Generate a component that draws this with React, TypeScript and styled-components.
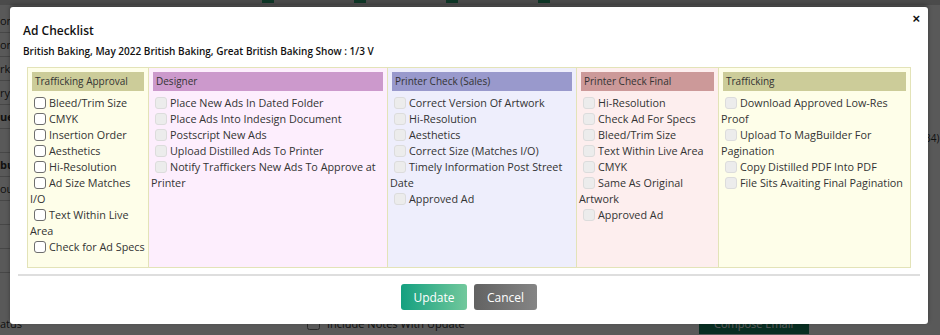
import styled, { createGlobalStyle } from 'styled-components';

const GlobalStyle = createGlobalStyle`
  body {
    margin: 0;
    font-family: "Open Sans", "Liberation Sans", sans-serif;
    color: #333;
  }
`;

type Column = {
  title: string;
  header: string;
  bg: string;
  enabled: boolean;
  items: string[];
};

const columns: Column[] = [
  {
    title: 'Trafficking Approval',
    header: '#cccc99',
    bg: '#fefee9',
    enabled: true,
    items: [
      'Bleed/Trim Size',
      'CMYK',
      'Insertion Order',
      'Aesthetics',
      'Hi-Resolution',
      'Ad Size Matches I/O',
      'Text Within Live Area',
      'Check for Ad Specs',
    ],
  },
  {
    title: 'Designer',
    header: '#cc99cc',
    bg: '#fdeefd',
    enabled: false,
    items: [
      'Place New Ads In Dated Folder',
      'Place Ads Into Indesign Document',
      'Postscript New Ads',
      'Upload Distilled Ads To Printer',
      'Notify Traffickers New Ads To Approve at Printer',
    ],
  },
  {
    title: 'Printer Check (Sales)',
    header: '#9999cc',
    bg: '#eeeefc',
    enabled: false,
    items: [
      'Correct Version Of Artwork',
      'Hi-Resolution',
      'Aesthetics',
      'Correct Size (Matches I/O)',
      'Timely Information Post Street Date',
      'Approved Ad',
    ],
  },
  {
    title: 'Printer Check Final',
    header: '#cc9999',
    bg: '#fdeeee',
    enabled: false,
    items: [
      'Hi-Resolution',
      'Check Ad For Specs',
      'Bleed/Trim Size',
      'Text Within Live Area',
      'CMYK',
      'Same As Original Artwork',
      'Approved Ad',
    ],
  },
  {
    title: 'Trafficking',
    header: '#cccc99',
    bg: '#fefee9',
    enabled: false,
    items: [
      'Download Approved Low-Res Proof',
      'Upload To MagBuilder For Pagination',
      'Copy Distilled PDF Into PDF',
      'File Sits Avaiting Final Pagination',
    ],
  },
];

// what peeks out from behind the dialog on the left
const sideRows = [
  { text: 'on', bold: false },
  { text: 'on', bold: false },
  { text: 'rk', bold: false },
  { text: 'ry', bold: false },
  { text: 'ue', bold: true },
  { text: '', bold: false },
  { text: 'bu', bold: true },
  { text: 'ou', bold: false },
  { text: '', bold: false },
  { text: '', bold: false },
  { text: '', bold: false },
];

const Screen = styled.div`
  position: relative;
  width: 940px;
  height: 335px;
  overflow: hidden;
  background: #fff;
`;

/* page behind the dialog */
const BackPage = styled.div`
  display: flex;
  flex-direction: column;
  height: 100%;
`;

const TopBar = styled.div`
  height: 5px;
  background: #d6d6d6;
  display: flex;
  gap: 80px;
  padding-left: 262px;
`;

const TabMark = styled.span`
  width: 12px;
  height: 3px;
  background: #2a9a6e;
`;

const BackBody = styled.div`
  flex: 1;
  display: flex;
  justify-content: space-between;
`;

const SideColumn = styled.div`
  width: 12px;
  display: flex;
  flex-direction: column;
  padding-top: 4px;
`;

const SideRow = styled.div<{ $bold: boolean }>`
  height: 23px;
  display: flex;
  align-items: center;
  white-space: nowrap;
  font-size: 11px;
  font-weight: ${(p) => (p.$bold ? 700 : 400)};
  border-bottom: 1px solid #ccc;
`;

const RightNote = styled.div`
  padding-top: 126px;
  font-size: 10px;
  width: 15px;
  white-space: nowrap;
`;

const BackFooter = styled.div`
  height: 24px;
  display: flex;
  align-items: center;
  font-size: 11px;
`;

const FooterStatus = styled.span`
  width: 20px;
  white-space: nowrap;
`;

const FooterCheck = styled.label`
  display: flex;
  align-items: center;
  gap: 4px;
  margin-left: 283px;
  white-space: nowrap;
`;

const ComposeButton = styled.span`
  background: #17805f;
  color: #fff;
  width: 110px;
  padding: 3px 0;
  text-align: center;
  margin-left: 234px;
`;

const Overlay = styled.div`
  position: absolute;
  inset: 0;
  background: rgba(0, 0, 0, 0.65);
`;

/* dialog */
const Modal = styled.div`
  position: absolute;
  left: 10px;
  top: 7px;
  width: 918px;
  height: 317px;
  background: #fff;
  border-radius: 3px;
  box-shadow: 0 -2px 4px rgba(0, 0, 0, 0.35);
  display: flex;
  flex-direction: column;
`;

const CloseButton = styled.button`
  position: absolute;
  top: 5px;
  right: 8px;
  border: none;
  background: none;
  padding: 0;
  font-size: 13px;
  font-weight: 700;
  line-height: 13px;
  color: #111;
  cursor: pointer;
`;

const Header = styled.div`
  padding: 15px 13px 0;
`;

const Title = styled.div`
  font-size: 12px;
  font-weight: 600;
  line-height: 18px;
  color: #111;
`;

const Subtitle = styled.div`
  margin-top: 3px;
  font-size: 10px;
  font-weight: 600;
  line-height: 16px;
  color: #111;
`;

const Table = styled.div`
  margin: 8px 17px 0;
  height: 201px;
  display: grid;
  grid-template-columns: 121px 239px 189px 142px 1fr;
  border: 1px solid #e3e3b8;
  box-sizing: border-box;
`;

const Col = styled.div<{ $bg: string }>`
  background: ${(p) => p.$bg};
  padding: 4px 2px 0;
  border-right: 1px solid #e3e3b8;
  &:last-child {
    border-right: none;
  }
`;

const ColHeader = styled.div<{ $bg: string }>`
  background: ${(p) => p.$bg};
  height: 19px;
  line-height: 19px;
  margin: 0 2px 4px;
  padding-left: 3px;
  font-size: 10px;
  color: #333;
`;

const Item = styled.label`
  display: block;
  font-size: 10.8px;
  line-height: 16px;
  color: #333;
`;

const Check = styled.input<{ $enabled: boolean }>`
  appearance: none;
  width: 12px;
  height: 12px;
  margin: 0 3px 0 4px;
  vertical-align: -2px;
  border-radius: 3px;
  box-sizing: border-box;
  border: 1px solid ${(p) => (p.$enabled ? '#6e6e6e' : '#dcdcdc')};
  background: ${(p) => (p.$enabled ? '#fff' : '#ececec')};
`;

const Separator = styled.div`
  margin: 6px 8px 0;
  border-top: 2px solid #dedede;
`;

const Footer = styled.div`
  display: flex;
  justify-content: center;
  gap: 7px;
  padding-top: 8px;
`;

const Button = styled.button<{ $variant: 'primary' | 'secondary' }>`
  height: 26px;
  width: ${(p) => (p.$variant === 'primary' ? '66px' : '63px')};
  border: none;
  border-radius: 3px;
  color: #fff;
  font-family: "Open Sans", "Liberation Sans", sans-serif;
  font-size: 12px;
  cursor: pointer;
  background: ${(p) =>
    p.$variant === 'primary'
      ? 'linear-gradient(to right, #14a080, #72c89c)'
      : 'linear-gradient(to right, #626262, #858585)'};
`;

export default function App() {
  return (
    <>
      <GlobalStyle />
      <Screen>
        <BackPage>
          <TopBar>
            <TabMark />
            <TabMark />
            <TabMark />
            <TabMark />
          </TopBar>
          <BackBody>
            <SideColumn>
              {sideRows.map((r, i) => (
                <SideRow key={i} $bold={r.bold}>
                  {r.text}
                </SideRow>
              ))}
            </SideColumn>
            <RightNote>34)</RightNote>
          </BackBody>
          <BackFooter>
            <FooterStatus>atus</FooterStatus>
            <FooterCheck>
              <input type="checkbox" />
              Include Notes With Update
            </FooterCheck>
            <ComposeButton>Compose Email</ComposeButton>
          </BackFooter>
        </BackPage>
        <Overlay />
        <Modal>
          <CloseButton>×</CloseButton>
          <Header>
            <Title>Ad Checklist</Title>
            <Subtitle>
              British Baking, May 2022 British Baking, Great British Baking Show : 1/3 V
            </Subtitle>
          </Header>
          <Table>
            {columns.map((c) => (
              <Col key={c.title} $bg={c.bg}>
                <ColHeader $bg={c.header}>{c.title}</ColHeader>
                {c.items.map((it) => (
                  <Item key={it}>
                    <Check type="checkbox" disabled={!c.enabled} $enabled={c.enabled} />
                    {it}
                  </Item>
                ))}
              </Col>
            ))}
          </Table>
          <Separator />
          <Footer>
            <Button $variant="primary">Update</Button>
            <Button $variant="secondary">Cancel</Button>
          </Footer>
        </Modal>
      </Screen>
    </>
  );
}
